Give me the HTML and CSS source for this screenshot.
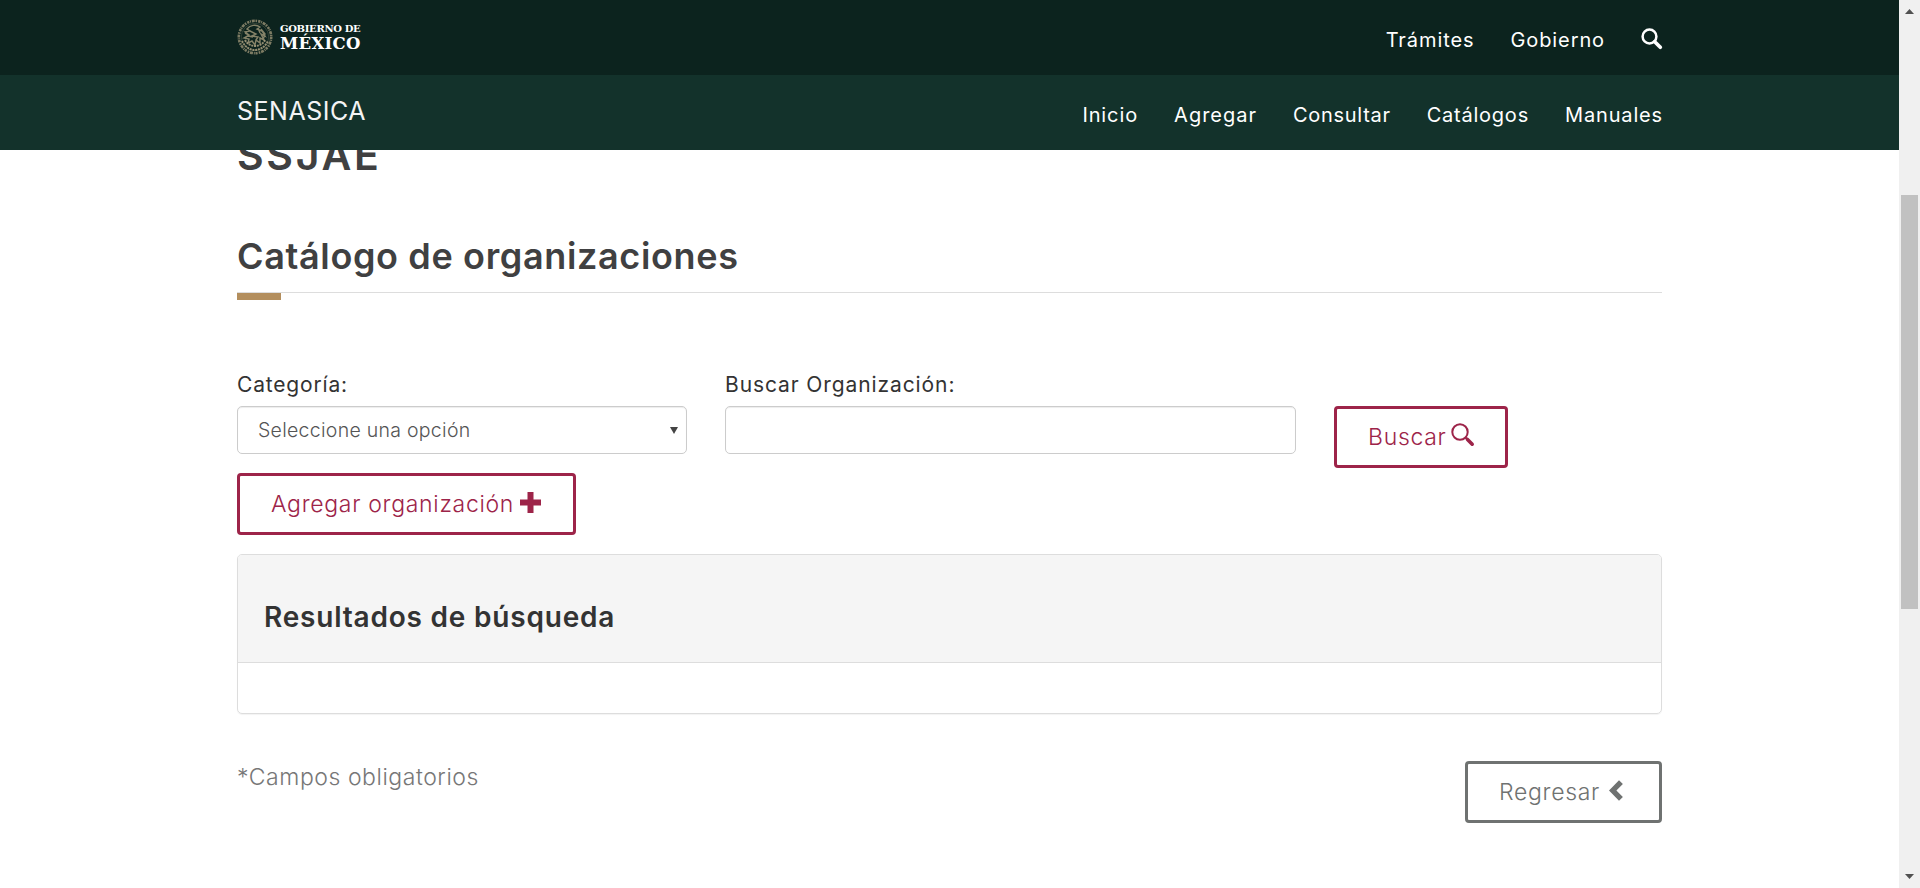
FILE: index.html
```
<!DOCTYPE html>
<html lang="es">
<head>
<meta charset="utf-8">
<title>Catálogo de organizaciones</title>
<link rel="stylesheet" href="styles.css">
</head>
<body>
<div class="page">
  <header class="header">
    <div class="bar bar-gob">
      <div class="container bar-inner">
        <a class="brand">
          <svg class="seal" viewBox="0 0 36 36" fill="none" stroke="#a39a7b">
            <circle cx="18" cy="18" r="16.2" stroke-width="2.6" stroke-dasharray="2.2 .7 1 .9 3 .8 1.6 1.1" opacity=".75"/>
            <circle cx="18" cy="18" r="13.7" stroke-width=".5" opacity=".5"/>
            <path d="M10 10c3-4 9-5 13-2l-3 2 5 2 3 5-4-2 3 6-4-2v5l-4-3-1 5-3-4-4 2 1-4-5-1 5-3-4-3 5-1zM13 12l6 3-4 2 6 1-2 3M21 9l2 5M11 17l5 1M8 14l4 2-4 3M24 10l4 5-2 6" stroke-width="1.4" opacity=".8"/>
            <path d="M5 22c3 6 8 9 13 9s10-3 13-9M8 21c2 4 6 6 10 6s8-2 10-6" stroke-width="2" stroke-dasharray="2 .8" opacity=".9"/>
          </svg>
          <span class="brand-text"><span class="brand-small">GOBIERNO DE</span><span class="brand-big">MÉXICO</span></span>
        </a>
        <nav class="nav">
          <a class="t-tramites">Trámites</a><a class="t-gobierno">Gobierno</a>
          <a class="nav-search"><svg viewBox="0 0 22 22" fill="none" stroke="#fff"><circle cx="8.5" cy="8.5" r="6.9" stroke-width="2.5"/><path d="M13.7 13.7l5.600 5.600" stroke-width="3.7" stroke-linecap="round"/></svg></a>
        </nav>
      </div>
    </div>
    <div class="bar bar-sub">
      <div class="container bar-inner">
        <a class="senasica">SENASICA</a>
        <nav class="nav">
          <a class="t-inicio">Inicio</a><a class="t-agregar">Agregar</a><a class="t-consultar">Consultar</a><a class="t-catalogos">Catálogos</a><a class="t-manuales">Manuales</a>
        </nav>
      </div>
    </div>
  </header>
  <main class="container main">
    <h1 class="title">SSJAE</h1>
    <h2 class="subtitle">Catálogo de organizaciones</h2>
    <hr class="rule">
    <div class="form-row">
      <div class="field field-cat">
        <label class="label t-cat">Categoría:</label>
        <div class="control"><span>Seleccione una opción</span><svg class="arrow" viewBox="0 0 8 7"><path d="M0 0h8L4 7z" fill="#444"/></svg></div>
      </div>
      <div class="field field-org">
        <label class="label">Buscar Organización:</label>
        <div class="control"></div>
      </div>
      <button class="btn btn-search">Buscar<svg class="ico-search" viewBox="0 0 24 24" fill="none" stroke="#9d2449"><circle cx="9" cy="9" r="7.7" stroke-width="2"/><path d="M14.5 14.5l1.8 1.8" stroke-width="2"/><path d="M16.500 16.500l4.700 4.700" stroke-width="3.6" stroke-linecap="round"/></svg></button>
    </div>
    <button class="btn btn-add">Agregar organización<svg class="ico-plus" viewBox="0 0 21 21"><path d="M7.5 0h6v7.5H21v6h-7.5V21h-6v-7.500H0v-6h7.500z" fill="#9d2449"/></svg></button>
    <section class="panel">
      <div class="panel-head"><h3>Resultados de búsqueda</h3></div>
      <div class="panel-body"></div>
    </section>
    <div class="footer-row">
      <p class="note">*Campos obligatorios</p>
      <button class="btn btn-back">Regresar<svg class="ico-left" viewBox="0 0 14 21"><path d="M0 10.5L10 .3l3.900 3.700-6.500 6.500 6.500 6.500-3.900 3.700z" fill="#6f7271"/></svg></button>
    </div>
  </main>
</div>
<div class="scrollbar">
  <svg viewBox="0 0 9 5"><path d="M0 5L4.500 0L9 5z" fill="#505050"/></svg>
  <div class="thumb"></div>
  <svg class="down" viewBox="0 0 9 5"><path d="M0 0L4.500 5L9 0z" fill="#505050"/></svg>
</div>
</body>
</html>
```
FILE: styles.css
```
* { box-sizing: border-box; }
body { margin: 0; height: 888px; overflow: hidden; display: flex; background: #fff; font-family: Inter, sans-serif; color: #404041; }
h1, h2, h3, p { margin: 0; font-weight: 600; }
svg { display: block; flex: none; }
.page { flex: 1; height: 888px; overflow: hidden; }
.container { width: 1425px; margin-left: 237px; }
.header { position: relative; z-index: 2; }
.bar { height: 75px; }
.bar-gob { background: #0c231e; }
.bar-sub { background: #13322b; }
.bar-inner { height: 75px; display: flex; justify-content: space-between; }
.brand { display: flex; padding-top: 19px; gap: 7px; color: #fff; }
.seal { width: 36px; height: 36px; }
.brand-text { display: flex; flex-direction: column; padding-top: 4px; font-family: "DejaVu Serif", serif; font-weight: 700; white-space: nowrap; }
.brand-small { font-size: 10px; line-height: 11px; letter-spacing: -.32px; }
.brand-big { font-size: 16.5px; line-height: 19px; letter-spacing: .3px; }
.nav { display: flex; gap: 36px; padding-top: 28px; color: #fff; font-size: 20px; font-weight: 400; line-height: 24px; white-space: nowrap; }
.t-tramites { letter-spacing: .92px; }
.t-gobierno { letter-spacing: .9px; }
.t-inicio { letter-spacing: .9px; }
.t-agregar { letter-spacing: 1px; }
.t-consultar { letter-spacing: .7px; }
.t-catalogos { letter-spacing: .77px; }
.t-manuales { margin-right: -1px; letter-spacing: .85px; }
.nav-search svg { width: 22px; height: 22px; }
.nav .nav-search { margin-right: -1px; }
.senasica { padding-top: 21px; color: #f4f4f4; font-size: 25px; line-height: 30px; letter-spacing: .5px; }
.main { display: flex; flex-direction: column; align-items: stretch; }
.title { height: 80px; margin-top: -20px; font-size: 41px; line-height: 50px; letter-spacing: 2.7px; }
.subtitle { height: 82px; padding-top: 24px; font-size: 36px; line-height: 44px; letter-spacing: .64px; }
.rule { width: 100%; height: 9px; margin: 0; border: 0; border-top: 1px solid #ddd; background: linear-gradient(#b38e5d, #b38e5d) no-repeat 0 0 / 44px 7px; }
.form-row { display: flex; padding-top: 72px; }
.field { display: flex; flex-direction: column; }
.field-cat { width: 450px; margin-right: 38px; }
.field-org { width: 571px; margin-right: 38px; }
.label { height: 33px; font-size: 21px; font-weight: 400; line-height: 24px; letter-spacing: .9px; color: #333; }
.t-cat { letter-spacing: .82px; }
.control { height: 48px; display: flex; justify-content: space-between; padding: 11px 8px 0 20px; border: 1px solid #ccc; border-radius: 5px; box-shadow: inset 0 1px 1px rgba(0,0,0,.075); font-size: 19.5px; font-weight: 300; line-height: 24px; letter-spacing: .28px; color: #555; }
.arrow { width: 8px; height: 7px; margin-top: 9px; }
.btn { display: flex; height: 62px; padding: 14px 0 0 31px; background: #fff; border: 3px solid #9d2449; border-radius: 4px; font-family: Inter, sans-serif; font-size: 23px; line-height: 28px; color: #9d2449; font-weight: 300; letter-spacing: .7px; }
.btn-search { width: 174px; margin-top: 33px; }
.btn-search svg { width: 24px; height: 24px; margin: 0 0 0 4px; }
.btn-add { width: 339px; margin-top: 5px; }
.btn-add svg { width: 21px; height: 21px; margin: 2px 0 0 6px; }
.panel { height: 160px; margin-top: 19px; border: 1px solid #ddd; border-radius: 5px; box-shadow: 0 1px 1px rgba(0,0,0,.05); overflow: hidden; }
.panel-head { height: 108px; padding: 45px 0 0 26px; background: #f5f5f5; border-bottom: 1px solid #ddd; color: #333; }
.panel-head h3 { font-size: 28px; line-height: 34px; letter-spacing: .8px; }
.footer-row { display: flex; justify-content: space-between; padding-top: 47px; }
.note { font-size: 23px; line-height: 32px; font-weight: 300; letter-spacing: .55px; color: #777; }
.btn-back { width: 197px; color: #6f7271; border-color: #6f7271; }
.btn-back svg { width: 14px; height: 21px; margin: 2px 0 0 9px; }
.scrollbar { width: 21px; height: 888px; display: flex; flex-direction: column; padding: 9px 0 9px 2px; background: #f0f0f0; }
.scrollbar svg { width: 9px; height: 5px; margin-left: 4px; }
.thumb { width: 17px; height: 414px; margin-top: 181px; background: #c1c1c1; }
.scrollbar .down { margin-top: auto; }
```
